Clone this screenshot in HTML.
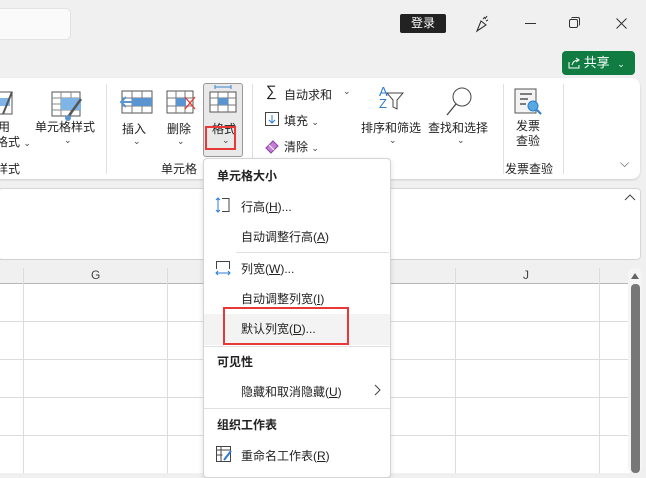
<!DOCTYPE html>
<html><head><meta charset="utf-8"><style>
*{margin:0;padding:0;box-sizing:border-box}
body{width:646px;height:473px;overflow:hidden;background:#f0f0f0;position:relative;font-family:"Liberation Sans","Noto Sans CJK SC",sans-serif;font-size:12px;color:#222}
.a{position:absolute;white-space:nowrap}
.t{font-size:12px}
.b{font-weight:bold}
.ch{font-size:9px;color:#444}
.ml{position:absolute;left:241px;font-size:12px}
.sep{position:absolute;height:1px;background:#e0e0e0}
</style></head><body>
<!-- title bar -->
<div class="a" style="left:-6px;top:8px;width:77px;height:32px;background:#fafafa;border:1px solid #e2e2e2;border-radius:5px"></div>
<div class="a" style="left:400px;top:14px;width:46px;height:19px;background:#222;color:#fff;border-radius:2px;text-align:center;line-height:19px;font-size:12px">登录</div>
<svg class="a" style="left:474px;top:15px" width="16" height="18" viewBox="0 0 16 18"><path d="M3 16 L7 6 L12 10 Z M9 4 L11 2 M12 6 L14 5 M11 4 L13 1" stroke="#333" fill="none" stroke-width="1.1"/></svg>
<div class="a" style="left:525px;top:23px;width:11px;height:1px;background:#333"></div>
<div class="a" style="left:569px;top:19px;width:9px;height:9px;border:1px solid #333;border-radius:2px"></div>
<div class="a" style="left:571px;top:17px;width:9px;height:9px;border-top:1px solid #333;border-right:1px solid #333;border-radius:2px"></div>
<svg class="a" style="left:616px;top:18px" width="11" height="11"><path d="M0.5 .5L10.5 10.5M10.5 .5L.5 10.5" stroke="#333"/></svg>
<div class="a" style="left:562px;top:51px;width:73px;height:24px;background:#107c41;border-radius:4px;color:#fff;font-size:13px;line-height:23px;padding-left:6px">
<svg style="vertical-align:-2px" width="12" height="12"><path d="M1 5v6h10v-3M4 8c1-4 4-5 7-5M8 1l3 2-3 2" stroke="#fff" fill="none"/></svg> 共享 <span style="font-size:9px;margin-left:4px">⌄</span></div>
<!-- ribbon -->
<div class="a" style="left:-10px;top:78px;width:650px;height:101px;background:#fff;border-radius:8px;box-shadow:0 1px 2px rgba(0,0,0,.15)"></div>
<div class="a" style="left:106px;top:84px;width:1px;height:90px;background:#e0e0e0"></div>
<div class="a" style="left:252px;top:84px;width:1px;height:90px;background:#e0e0e0"></div>
<div class="a" style="left:503px;top:84px;width:1px;height:90px;background:#e0e0e0"></div>
<div class="a" style="left:563px;top:84px;width:1px;height:90px;background:#e0e0e0"></div>
<!-- left partial -->
<svg class="a" style="left:0;top:90px" width="14" height="36"><rect x="-4" y="2" width="16" height="22" fill="#fff" stroke="#555"/><rect x="0" y="8" width="10" height="8" fill="#7fb5e6"/><path d="M12 2 L3 24" stroke="#555" stroke-width="2"/></svg>
<div class="a t" style="left:-2px;top:118px">用</div>
<div class="a t" style="left:-4px;top:133px">格式 <span class="ch">⌄</span></div>
<div class="a t" style="left:-4px;top:160px">样式</div>
<svg class="a" style="left:51px;top:89px" width="34" height="34"><rect x="1" y="3" width="28" height="24" fill="#fff" stroke="#555"/><path d="M1 9h28M1 15h28M1 21h28M10 3v24M20 3v24" stroke="#888"/><rect x="10" y="9" width="20" height="12" fill="#7fb5e6"/><path d="M30 10L17 28" stroke="#555" stroke-width="2.5"/><circle cx="17" cy="29" r="3" fill="#5a95cf"/></svg>
<div class="a t" style="left:35px;top:118px">单元格样式</div>
<div class="a ch" style="left:64px;top:135px">⌄</div>
<!-- cells group -->
<svg class="a" style="left:119px;top:90px" width="36" height="26"><rect x="3" y="1" width="30" height="22" fill="#fff" stroke="#555"/><path d="M3 8h30M3 16h30M13 1v22M23 1v22" stroke="#777"/><rect x="13" y="8" width="20" height="8" fill="#5a95cf"/><path d="M15 12H2M7 7L2 12l5 5" stroke="#5a95cf" stroke-width="2" fill="none"/></svg>
<div class="a t" style="left:122px;top:120px">插入</div>
<div class="a ch" style="left:133px;top:136px">⌄</div>
<svg class="a" style="left:166px;top:90px" width="32" height="26"><rect x="1" y="1" width="26" height="22" fill="#fff" stroke="#555"/><path d="M1 8h26M1 16h26M10 1v22M19 1v22" stroke="#777"/><rect x="10" y="8" width="10" height="8" fill="#5a95cf"/><path d="M19 7l10 12M29 7L19 19" stroke="#e33" stroke-width="1.3"/></svg>
<div class="a t" style="left:167px;top:120px">删除</div>
<div class="a ch" style="left:177px;top:136px">⌄</div>
<div class="a" style="left:203px;top:83px;width:40px;height:74px;background:#e9e9e9;border:1px solid #999;border-radius:3px"></div>
<svg class="a" style="left:208px;top:84px" width="30" height="30"><path d="M7 3h16M7 1v4M23 1v4" stroke="#3a85d0"/><rect x="2" y="8" width="26" height="20" fill="#fff" stroke="#555"/><path d="M2 14h26M2 21h26M10 8v20M20 8v20" stroke="#777"/><rect x="10" y="14" width="10" height="7" fill="#5a95cf"/></svg>
<div class="a t" style="left:212px;top:120px">格式</div>
<div class="a ch" style="left:222px;top:135px">⌄</div>
<div class="a" style="left:205px;top:126px;width:31px;height:24px;border:2px solid #e83838"></div>
<div class="a t" style="left:161px;top:160px">单元格</div>
<!-- editing -->
<div class="a" style="left:266px;top:83px;font-size:15px">∑</div>
<div class="a t" style="left:284px;top:86px">自动求和</div>
<div class="a ch" style="left:343px;top:86px">⌄</div>
<svg class="a" style="left:265px;top:112px" width="14" height="14"><rect x=".5" y=".5" width="13" height="13" fill="#fff" stroke="#444"/><path d="M7 3v8M4 8l3 3 3-3" stroke="#2b7cd3" fill="none"/></svg>
<div class="a t" style="left:284px;top:112px">填充 <span class="ch">⌄</span></div>
<svg class="a" style="left:264px;top:138px" width="16" height="16"><path d="M2 10L9 3l5 5-7 7z" fill="#c67ed6" stroke="#8a3fa0"/><path d="M5 7l5 5" stroke="#fff"/></svg>
<div class="a t" style="left:284px;top:138px">清除 <span class="ch">⌄</span></div>
<div class="a" style="left:379px;top:86px;font-size:13px;color:#2b7cd3;line-height:12px">A<br>Z</div>
<svg class="a" style="left:386px;top:91px" width="20" height="20"><path d="M1 2h16l-6 7v9l-4-2V9z" fill="none" stroke="#444"/></svg>
<div class="a t" style="left:361px;top:119px">排序和筛选</div>
<div class="a ch" style="left:389px;top:135px">⌄</div>
<svg class="a" style="left:444px;top:86px" width="30" height="32"><circle cx="18" cy="11" r="9" fill="#fff" stroke="#444"/><path d="M12 18L3 29" stroke="#444" stroke-width="1.3"/></svg>
<div class="a t" style="left:428px;top:119px">查找和选择</div>
<div class="a ch" style="left:457px;top:135px">⌄</div>
<svg class="a" style="left:513px;top:87px" width="30" height="30"><rect x="2" y="2" width="21" height="24" fill="#f3f3f3" stroke="#555"/><path d="M7 7h12M7 12h8M7 17h6" stroke="#555" stroke-width="1.5"/><circle cx="20" cy="19" r="5" fill="#5aa8e0" stroke="#2b7cd3"/><path d="M24 23l4 4" stroke="#2b7cd3" stroke-width="2"/></svg>
<div class="a t" style="left:516px;top:119px;line-height:15px">发票<br>查验</div>
<div class="a t" style="left:505px;top:160px">发票查验</div>
<div class="a" style="left:620px;top:156px;font-size:12px;color:#444">⌵</div>
<!-- formula area -->
<div class="a" style="left:-2px;top:188px;width:643px;height:72px;background:#fff;border:1px solid #d6d6d6;border-radius:4px"></div>
<svg class="a" style="left:624px;top:194px" width="12" height="8"><path d="M1 6l5-5 5 5" stroke="#444" fill="none"/></svg>
<!-- grid -->
<div class="a" style="left:0;top:259px;width:630px;height:25px;background:#f0f0f0;border-top:1px solid #d0d0d0;border-bottom:1px solid #b8b8b8"></div>
<div class="a" style="left:0;top:284px;width:630px;height:189px;background:#fff"></div>
<div class="a" style="left:23px;top:268px;width:1px;height:205px;background:#dcdcdc"></div>
<div class="a" style="left:167px;top:268px;width:1px;height:205px;background:#dcdcdc"></div>
<div class="a" style="left:455px;top:268px;width:1px;height:205px;background:#dcdcdc"></div>
<div class="a" style="left:599px;top:268px;width:1px;height:205px;background:#dcdcdc"></div>
<div class="a" style="left:0;top:321px;width:630px;height:1px;background:#dcdcdc"></div>
<div class="a" style="left:0;top:359px;width:630px;height:1px;background:#dcdcdc"></div>
<div class="a" style="left:0;top:397px;width:630px;height:1px;background:#dcdcdc"></div>
<div class="a" style="left:0;top:435px;width:630px;height:1px;background:#dcdcdc"></div>
<div class="a" style="left:91px;top:268px;font-size:12px;color:#444">G</div>
<div class="a" style="left:523px;top:268px;font-size:12px;color:#444">J</div>
<div class="a" style="left:628px;top:268px;width:14px;height:205px;background:#f5f5f5;border-radius:6px"></div>
<svg class="a" style="left:630px;top:272px" width="10" height="8"><path d="M1 7L5 1 9 7z" fill="#666"/></svg>
<div class="a" style="left:631px;top:284px;width:9px;height:189px;background:#777;border-radius:4px"></div>
<!-- menu -->
<div class="a" style="left:203px;top:158px;width:188px;height:320px;background:#fff;border:1px solid #d4d4d4;border-radius:4px;box-shadow:0 2px 6px rgba(0,0,0,.12)"></div>
<div class="a b" style="left:217px;top:167px;font-size:12px">单元格大小</div>
<svg class="a" style="left:215px;top:197px" width="16" height="16"><path d="M3 1v14M1 3l2-2 2 2M1 13l2 2 2-2" stroke="#2b7cd3" fill="none"/><path d="M7 1.5h7v13H7" stroke="#444" fill="none"/></svg>
<div class="ml" style="top:198px">行高(<u>H</u>)...</div>
<div class="ml" style="top:228px">自动调整行高(<u>A</u>)</div>
<div class="sep" style="left:236px;top:252px;width:153px"></div>
<svg class="a" style="left:215px;top:260px" width="16" height="16"><path d="M1.5 9V1.5h13V9" stroke="#444" fill="none"/><path d="M1 13h14M3 11l-2 2 2 2M13 11l2 2-2 2" stroke="#2b7cd3" fill="none"/></svg>
<div class="ml" style="top:260px">列宽(<u>W</u>)...</div>
<div class="ml" style="top:290px">自动调整列宽(<u>I</u>)</div>
<div class="a" style="left:204px;top:314px;width:186px;height:31px;background:#f3f3f3"></div>
<div class="ml" style="top:320px">默认列宽(<u>D</u>)...</div>
<div class="a" style="left:223px;top:307px;width:126px;height:38px;border:2px solid #e83838"></div>
<div class="sep" style="left:204px;top:346px;width:186px"></div>
<div class="a b" style="left:217px;top:353px;font-size:12px">可见性</div>
<div class="ml" style="top:383px">隐藏和取消隐藏(<u>U</u>)</div>
<svg class="a" style="left:374px;top:384px" width="8" height="12"><path d="M1 1l5 5-5 5" stroke="#444" fill="none"/></svg>
<div class="sep" style="left:204px;top:408px;width:186px"></div>
<div class="a b" style="left:217px;top:416px;font-size:12px">组织工作表</div>
<svg class="a" style="left:215px;top:445px" width="18" height="18"><rect x="1.5" y="1.5" width="14" height="15" fill="#fff" stroke="#444"/><path d="M1.5 5h14M6 1.5v15M1.5 10h6" stroke="#444"/><path d="M16 6L9 15" stroke="#2b7cd3" stroke-width="2"/></svg>
<div class="ml" style="top:447px">重命名工作表(<u>R</u>)</div>
</body></html>
